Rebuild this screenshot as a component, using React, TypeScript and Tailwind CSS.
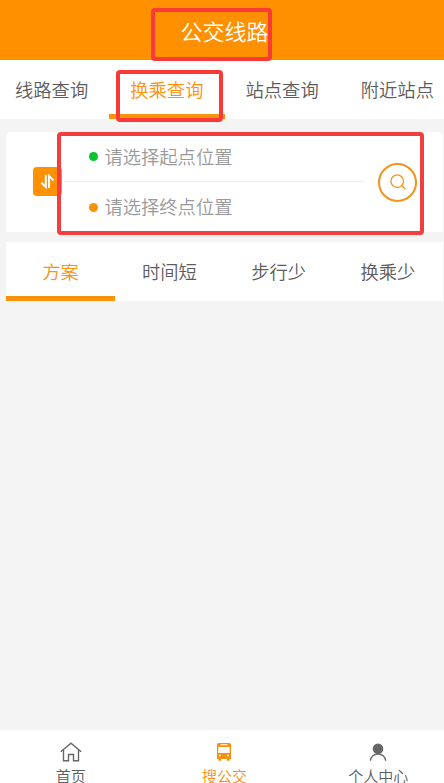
import React from "react";

const mainTabs = ["线路查询", "换乘查询", "站点查询", "附近站点"];
const planTabs = ["方案", "时间短", "步行少", "换乘少"];

function HomeIcon() {
  return (
    <svg width="22" height="20" viewBox="0 0 22 20" fill="none" stroke="#666" strokeWidth="1.4">
      <path d="M0.8 9.8 L11 1.2 L21.2 9.8" />
      <path d="M3.5 8V18.8H8.5V12.5H13.5V18.8H18.5V8" />
    </svg>
  );
}

function BusIcon() {
  return (
    <svg width="16" height="20" viewBox="0 0 16 20">
      <path
        fillRule="evenodd"
        fill="#f7900f"
        d="M2.5 1H13.5Q15 1 15 2.5V17H13.6V18.8H11V17H5V18.8H2.4V17H1V2.5Q1 1 2.5 1ZM4.5 2.2V3.2H11.5V2.2ZM2.3 5V11H13.7V5ZM3 12.8V14.2H4.8V12.8ZM11.2 12.8V14.2H13V12.8Z"
      />
    </svg>
  );
}

function PersonIcon() {
  return (
    <svg width="18" height="20" viewBox="0 0 18 20" fill="none">
      <circle cx="9" cy="6.8" r="5.3" fill="#666" />
      <path d="M1.4 18.8C1.6 9.8 16.4 9.8 16.6 18.8" stroke="#666" strokeWidth="1.4" />
    </svg>
  );
}

const navItems = [
  { label: "首页", icon: <HomeIcon />, active: false },
  { label: "搜公交", icon: <BusIcon />, active: true },
  { label: "个人中心", icon: <PersonIcon />, active: false },
];

export default function App() {
  return (
    <div className="relative flex h-[783px] w-[444px] flex-col overflow-hidden bg-[#f4f4f4] font-['Noto_Sans_CJK_SC',sans-serif] font-[350] text-[#5c5c5c]">
      <header className="flex h-[60px] shrink-0 items-center justify-center bg-[#ff9000] pb-[1px] pl-[5px] pt-[1px] text-[22px] leading-[30px] text-white">
        公交线路
      </header>

      <nav className="-ml-[6px] grid h-[59px] w-[461px] shrink-0 grid-cols-4 bg-white">
        {mainTabs.map((label, i) => (
          <div
            key={label}
            className={`flex items-center justify-center border-b-[5px] pt-[3px] text-[18.3px] leading-7 ${
              i === 1 ? "border-[#fb920b] text-[#fb920b]" : "border-transparent"
            }`}
          >
            {label}
          </div>
        ))}
      </nav>

      <section className="ml-[6px] mt-[13px] flex h-[100px] w-[437px] shrink-0 items-center rounded-t-[5px] bg-white">
        <div className="-mt-px ml-[27px] flex h-[29px] w-[29px] items-center justify-center rounded-[4px] bg-[#ff9000]">
          <svg width="15" height="15" viewBox="0 0 15 15" fill="none" stroke="white" strokeWidth="2">
            <path d="M1.3 8.7L5.8 13V1" />
            <path d="M9 14V2L13.5 6.5" />
          </svg>
        </div>
        <div className="ml-[2px] flex h-full w-[301px] flex-col text-[18.3px] text-[#999]">
          <div className="flex h-[50px] items-center border-b border-[#eeeeee] pl-[25px]">
            <span className="mr-[6.5px] h-[9px] w-[9px] rounded-full bg-[#08c52b]" />
            请选择起点位置
          </div>
          <div className="flex h-[50px] items-center pl-[25px]">
            <span className="mr-[6.5px] h-[9px] w-[9px] rounded-full bg-[#fb920b]" />
            请选择终点位置
          </div>
        </div>
        <div className="ml-[13px] flex h-[39px] w-[39px] items-center justify-center rounded-full border-[2.5px] border-[#f3931b]">
          <svg width="16" height="16" viewBox="0 0 16 16" fill="none" stroke="#f3931b" strokeWidth="1.3">
            <circle cx="7.2" cy="7.2" r="6.3" />
            <path d="M11.6 11.6L15.3 15" />
          </svg>
        </div>
      </section>

      <nav className="ml-[6px] mt-[10px] grid h-[59px] w-[437px] shrink-0 grid-cols-4 bg-white">
        {planTabs.map((label, i) => (
          <div
            key={label}
            className={`flex items-center justify-center border-b-[5px] pt-[3px] text-[18.3px] leading-7 ${
              i === 0 ? "border-[#fb920b] text-[#fb920b]" : "border-transparent pr-px"
            }`}
          >
            {label}
          </div>
        ))}
      </nav>

      <footer className="-ml-[6px] mt-auto grid h-[53px] w-[461px] shrink-0 grid-cols-3 bg-white">
        {navItems.map((item) => (
          <div
            key={item.label}
            className={`flex flex-col items-center pt-[12px] text-[15px] leading-[18px] ${
              item.active ? "text-[#f7900f]" : ""
            }`}
          >
            {item.icon}
            <span className="mt-[5px]">{item.label}</span>
          </div>
        ))}
      </footer>

      <div className="absolute left-[151px] top-[8px] h-[53px] w-[121px] rounded-[4px] border-4 border-[#f93b38]" />
      <div className="absolute left-[116px] top-[70px] h-[52px] w-[107px] rounded-[4px] border-4 border-[#f93b38]" />
      <div className="absolute left-[57px] top-[132px] h-[103px] w-[367px] rounded-[4px] border-4 border-[#f23e3e]" />
    </div>
  );
}
